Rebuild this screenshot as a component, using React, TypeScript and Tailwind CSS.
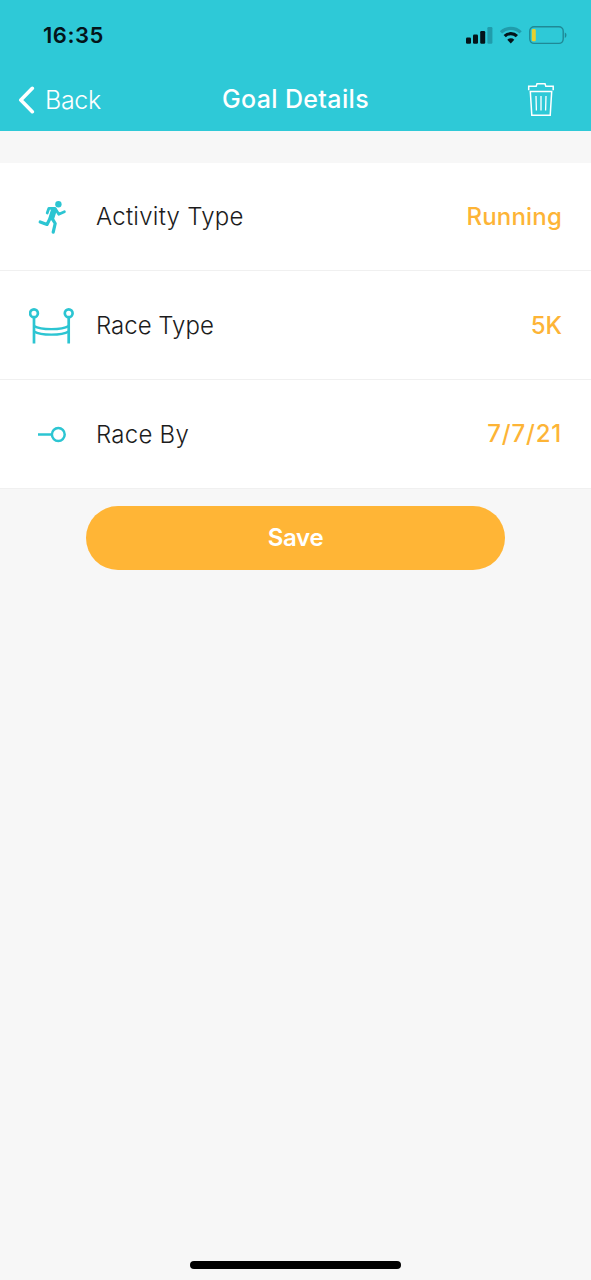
import React from "react";

function StatusIcons() {
  return (
    <svg width="104" height="22" viewBox="464 24 104 22" fill="none">
      <rect x="466" y="37.5" width="5" height="6.3" rx="1.2" fill="#04141a" />
      <rect x="473" y="34.5" width="5" height="9.3" rx="1.2" fill="#04141a" />
      <rect x="480.2" y="31" width="5" height="12.8" rx="1.2" fill="#04141a" />
      <rect x="487.4" y="27" width="5" height="16.8" rx="1.2" fill="#209cab" />
      <path d="M501 32.3a14 14 0 0 1 19.6 0" stroke="#209cab" strokeWidth="3.2" />
      <path d="M504.7 36.2a8.7 8.7 0 0 1 12.2 0" stroke="#04141a" strokeWidth="3.2" />
      <path d="M507.3 39.7a5 5 0 0 1 7 0l-3.5 3.9z" fill="#04141a" />
      <rect x="529.8" y="26.8" width="33.4" height="16.6" rx="4.3" stroke="#1f8996" strokeWidth="1.4" />
      <rect x="531.8" y="29" width="4" height="12.3" rx="1.4" fill="#e6d02f" />
      <path d="M564.8 32.5c2.2.8 2.2 4.6 0 5.4z" fill="#1f8996" />
    </svg>
  );
}

function TrashIcon() {
  return (
    <svg width="28" height="36" viewBox="527 80 28 36" fill="none" stroke="white" strokeWidth="1.5">
      <path d="M528.7 89.3V85.2H536.2L537 82.8H545L545.8 85.2H553.2V89.3" />
      <path d="M530.3 90.5H551.7L550.2 114.2H531.8Z" />
      <path d="M536 95L536.4 109.5M541 95V109.5M546 95L545.6 109.5" strokeWidth="1.3" />
    </svg>
  );
}

function RunnerIcon() {
  return (
    <svg width="46" height="40" viewBox="29 197 46 40" fill="none" stroke="#2cc5d2" strokeLinecap="round" strokeLinejoin="round">
      <circle cx="58.4" cy="204.3" r="3.2" fill="#2cc5d2" stroke="none" />
      <path d="M47.2 213L48.9 208.3L55 208.3L58.8 214.2L64.4 211.8" strokeWidth="2.8" />
      <path d="M53.8 210.3L51.6 217.3" strokeWidth="5.8" />
      <path d="M52 218.2L55.2 223.5L53.2 232.2M50 218.5L47 224.4L40.2 222" strokeWidth="3.2" />
    </svg>
  );
}

function RaceIcon() {
  return (
    <svg width="46" height="40" viewBox="29 306 46 40" fill="none" stroke="#2cc5d2" strokeWidth="2.7">
      <circle cx="34" cy="314.3" r="3.9" />
      <circle cx="68.7" cy="314.3" r="3.9" />
      <path d="M34 318V344.5M68.7 318V344.5" />
      <path d="M34 327C41 331.3 61.7 331.3 68.7 327M34 332.5C41 336.8 61.7 336.8 68.7 332.5" strokeWidth="2.3" />
    </svg>
  );
}

function DateIcon() {
  return (
    <svg width="46" height="40" viewBox="29 414 46 40" fill="none" stroke="#2cc5d2" strokeWidth="2.5">
      <path d="M38 434.5H51.5" />
      <circle cx="58.3" cy="434.5" r="6.4" />
    </svg>
  );
}

function App() {
  return (
    <div className="flex h-[1280px] w-full flex-col bg-[#f7f7f7] font-['Inter',sans-serif]">
      <header className="flex h-[131px] flex-col bg-[#2ec9d7]">
        <div className="flex h-[70px] items-center justify-between pl-[43px] pr-[23px]">
          <span className="pt-px text-[22px] font-semibold tracking-[0.5px] text-[#04141a]">16:35</span>
          <StatusIcons />
        </div>
        <div className="grid h-[60px] grid-cols-[1fr_auto_1fr] items-center px-[18px] text-white">
          <button className="flex items-center gap-2.5">
            <svg width="17" height="28" viewBox="0 0 17 28" fill="none" stroke="white" strokeWidth="3.6" strokeLinecap="round" strokeLinejoin="round">
              <path d="M14.3 2.3L2.8 14L14.3 25.7" />
            </svg>
            <span className="pt-px text-[25px] font-light tracking-[-0.3px]">Back</span>
          </button>
          <h1 className="text-[25px] font-medium tracking-[0.35px]">Goal Details</h1>
          <button className="mb-[3px] mr-[18px] justify-self-end">
            <TrashIcon />
          </button>
        </div>
      </header>

      <main className="mt-8">
        <div className="flex h-[108px] items-center border-b border-[#f0f0f0] bg-white pl-[29px] pr-[29px]">
          <RunnerIcon />
          <span className="ml-[21px] text-2xl font-light tracking-[0.25px] text-[#1c1c1c]">Activity Type</span>
          <span className="ml-auto text-2xl font-medium tracking-[0.2px] text-[#fdb436]">Running</span>
        </div>
        <div className="flex h-[109px] items-center border-b border-[#f0f0f0] bg-white pl-[29px] pr-[29px]">
          <RaceIcon />
          <span className="ml-[21px] pt-0.5 text-2xl font-light text-[#1c1c1c]">Race Type</span>
          <span className="ml-auto pt-0.5 text-2xl font-medium text-[#fdb436]">5K</span>
        </div>
        <div className="flex h-[109px] items-center border-b border-[#f0f0f0] bg-white pl-[29px] pr-[29px]">
          <DateIcon />
          <span className="ml-[21px] pt-px text-2xl font-light tracking-[0.25px] text-[#1c1c1c]">Race By</span>
          <span className="ml-auto text-2xl font-medium tracking-[0.8px] text-[#fdb436]">7/7/21</span>
        </div>
        <button className="mx-auto mt-[17px] flex h-16 w-[419px] items-center justify-center rounded-full bg-[#ffb536] text-2xl font-semibold tracking-[-0.3px] text-white">
          Save
        </button>
      </main>

      <div className="mx-auto mb-[11px] mt-auto h-2 w-[211px] rounded-full bg-black" />
    </div>
  );
}

export default App;
